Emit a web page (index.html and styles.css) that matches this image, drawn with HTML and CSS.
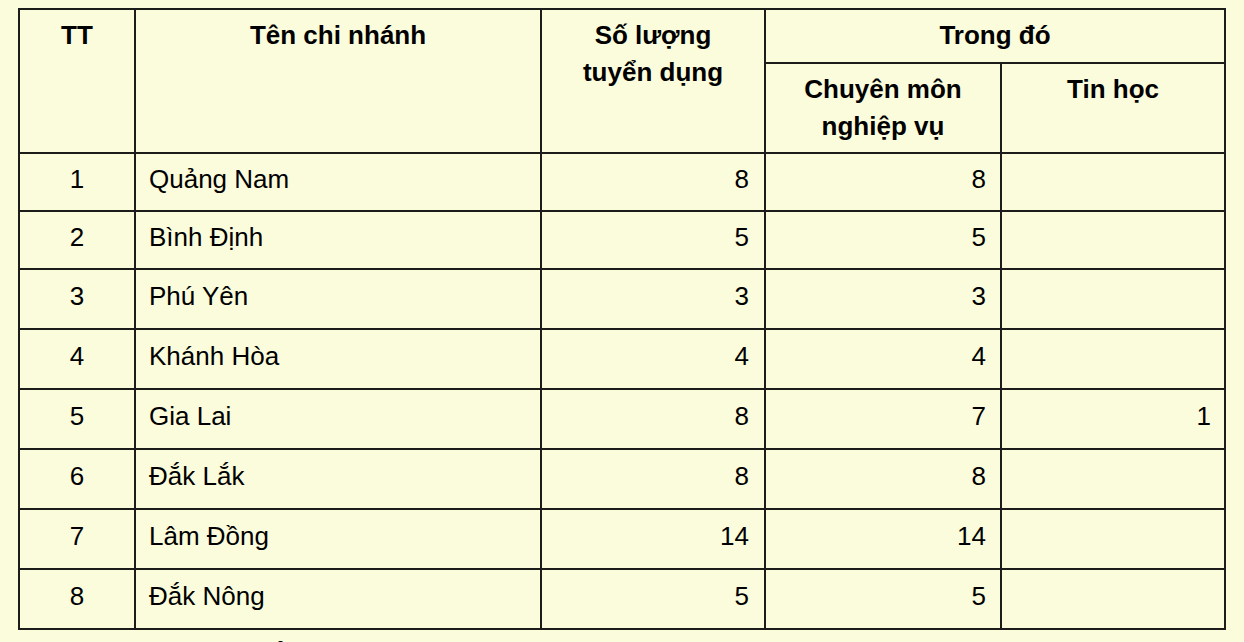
FILE: index.html
```html
<!DOCTYPE html>
<html lang="vi">
<head>
<meta charset="utf-8">
<title>Chỉ tiêu tuyển dụng</title>
<link rel="stylesheet" href="styles.css">
</head>
<body>
<table class="grid">
  <colgroup>
    <col class="c-tt">
    <col class="c-name">
    <col class="c-qty">
    <col class="c-cm">
    <col class="c-th">
  </colgroup>
  <thead>
    <tr class="h1">
      <th rowspan="2">TT</th>
      <th rowspan="2">Tên chi nhánh</th>
      <th rowspan="2">Số lượng<br>tuyển dụng</th>
      <th colspan="2">Trong đó</th>
    </tr>
    <tr class="h2">
      <th>Chuyên môn<br>nghiệp vụ</th>
      <th>Tin học</th>
    </tr>
  </thead>
  <tbody>
    <tr class="r58"><td class="tt">1</td><td class="name">Quảng Nam</td><td class="qty">8</td><td class="cm">8</td><td class="th"></td></tr>
    <tr class="r58"><td class="tt">2</td><td class="name">Bình Định</td><td class="qty">5</td><td class="cm">5</td><td class="th"></td></tr>
    <tr class="r60"><td class="tt">3</td><td class="name">Phú Yên</td><td class="qty">3</td><td class="cm">3</td><td class="th"></td></tr>
    <tr class="r60"><td class="tt">4</td><td class="name">Khánh Hòa</td><td class="qty">4</td><td class="cm">4</td><td class="th"></td></tr>
    <tr class="r60"><td class="tt">5</td><td class="name">Gia Lai</td><td class="qty">8</td><td class="cm">7</td><td class="th">1</td></tr>
    <tr class="r60"><td class="tt">6</td><td class="name">Đắk Lắk</td><td class="qty">8</td><td class="cm">8</td><td class="th"></td></tr>
    <tr class="r60"><td class="tt">7</td><td class="name">Lâm Đồng</td><td class="qty">14</td><td class="cm">14</td><td class="th"></td></tr>
    <tr class="r60"><td class="tt">8</td><td class="name">Đắk Nông</td><td class="qty">5</td><td class="cm">5</td><td class="th"></td></tr>
  </tbody>
</table>
<p class="note">Nguồn: Chi nhánh tuyển dụng</p>
</body>
</html>
```
FILE: styles.css
```css
html, body {
  margin: 0;
  padding: 0;
  background: #fafcdc;
}
body {
  font-family: "Liberation Sans", Arial, sans-serif;
  font-size: 26px;
  color: #000;
  height: 642px;
  overflow: hidden;
}
.grid {
  margin: 8px 0 0 18px;
  border-collapse: collapse;
  table-layout: fixed;
  width: 1208px;
}
.c-tt { width: 116px; }
.c-name { width: 406px; }
.c-qty { width: 224px; }
.c-cm { width: 236px; }
.c-th { width: 224px; }
.grid th,
.grid td {
  border: 2px solid #1c1c1a;
  padding: 0;
}
.grid th {
  font-weight: bold;
  text-align: center;
  vertical-align: top;
  line-height: 37px;
  padding-top: 7px;
}
.grid td {
  vertical-align: middle;
  line-height: 30px;
  padding-bottom: 7px;
}
.h1 { height: 54px; }
.h2 { height: 90px; }
.r58 { height: 58px; }
.r60 { height: 60px; }
.grid .tt { text-align: center; }
.grid .name { text-align: left; padding-left: 13px; }
.grid .qty { text-align: right; padding-right: 15px; }
.grid .cm { text-align: right; padding-right: 14px; }
.grid .th { text-align: right; padding-right: 13px; }
.note {
  margin: 7px 0 0 18px;
  line-height: 32px;
}
```
